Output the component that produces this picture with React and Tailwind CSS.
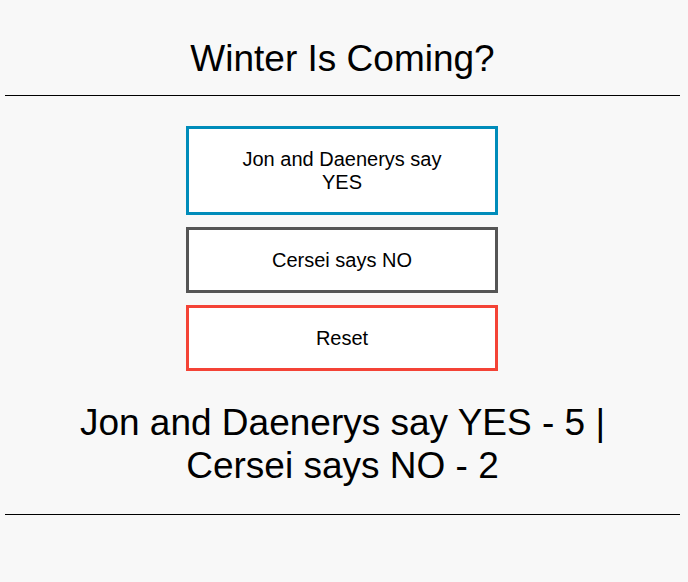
export default function App() {
  return (
    <div
      className="min-h-screen bg-[#f8f8f8] pl-[5px] pr-[8px] pt-[38px] text-black"
      style={{ fontFamily: '"Liberation Sans", Arial, sans-serif' }}
    >
      <h1 className="text-center text-[37px] leading-[42.5px] font-normal">Winter Is Coming?</h1>
      <div className="mt-[14.5px] h-px bg-black" />
      <div className="mt-[30px] mr-px flex flex-col items-center gap-3">
        <button className="w-[312px] border-[3px] border-[#008CBA] bg-white px-10 pt-[19px] pb-[18px] text-[20px] leading-[23px] text-black">
          Jon and Daenerys say YES
        </button>
        <button className="w-[312px] border-[3px] border-[#555555] bg-white px-10 pt-[19px] pb-[18px] text-[20px] leading-[23px] text-black">
          Cersei says NO
        </button>
        <button className="w-[312px] border-[3px] border-[#f44336] bg-white px-10 pt-[19px] pb-[18px] text-[20px] leading-[23px] text-black">
          Reset
        </button>
      </div>
      <p className="mx-auto mt-[31px] max-w-[600px] text-center text-[37px] leading-[42.5px]">
        Jon and Daenerys say YES - 5 | Cersei says NO - 2
      </p>
      <div className="mt-[27px] h-px bg-black" />
    </div>
  );
}
